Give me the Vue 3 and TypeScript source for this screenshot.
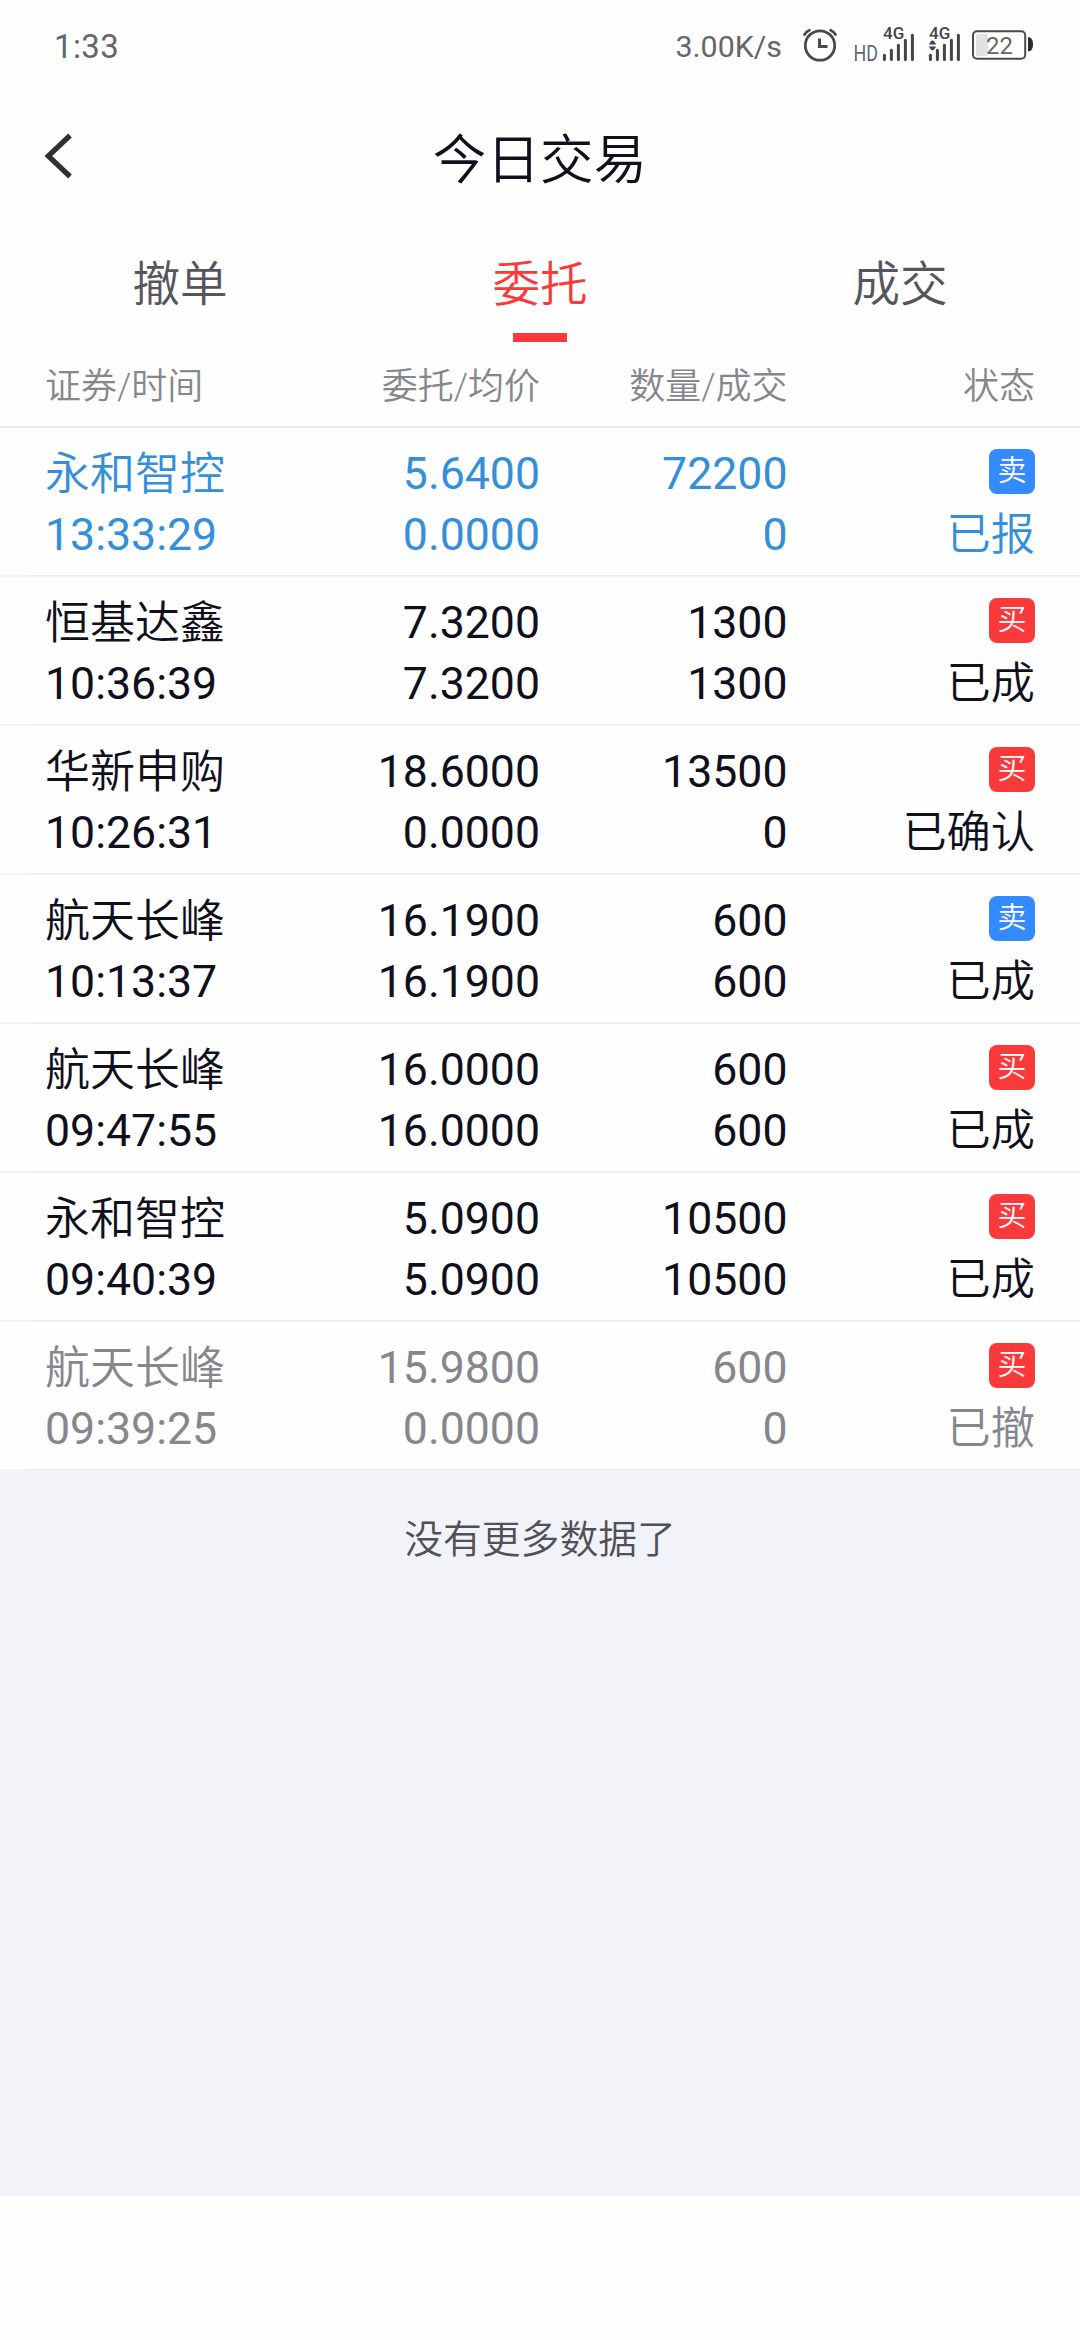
<script setup lang="ts">
type Side = 'buy' | 'sell'
type Tone = 'pending' | 'done' | 'cancelled'

interface Order {
  name: string
  time: string
  price: string
  average: string
  amount: string
  filled: string
  side: Side
  status: string
  tone: Tone
}

const tabs = ['撤单', '委托', '成交']
const activeTab = '委托'
const columns = ['证券/时间', '委托/均价', '数量/成交', '状态']
const sideLabel: Record<Side, string> = { buy: '买', sell: '卖' }

const orders: Order[] = [
  { name: '永和智控', time: '13:33:29', price: '5.6400', average: '0.0000', amount: '72200', filled: '0', side: 'sell', status: '已报', tone: 'pending' },
  { name: '恒基达鑫', time: '10:36:39', price: '7.3200', average: '7.3200', amount: '1300', filled: '1300', side: 'buy', status: '已成', tone: 'done' },
  { name: '华新申购', time: '10:26:31', price: '18.6000', average: '0.0000', amount: '13500', filled: '0', side: 'buy', status: '已确认', tone: 'done' },
  { name: '航天长峰', time: '10:13:37', price: '16.1900', average: '16.1900', amount: '600', filled: '600', side: 'sell', status: '已成', tone: 'done' },
  { name: '航天长峰', time: '09:47:55', price: '16.0000', average: '16.0000', amount: '600', filled: '600', side: 'buy', status: '已成', tone: 'done' },
  { name: '永和智控', time: '09:40:39', price: '5.0900', average: '5.0900', amount: '10500', filled: '10500', side: 'buy', status: '已成', tone: 'done' },
  { name: '航天长峰', time: '09:39:25', price: '15.9800', average: '0.0000', amount: '600', filled: '0', side: 'buy', status: '已撤', tone: 'cancelled' },
]

const bars = [0, 1, 2, 3, 4]
</script>

<template>
  <div class="screen">
    <div class="statusbar">
      <span class="clock">1:33</span>
      <div class="indicators">
        <span class="speed">3.00K/s</span>
        <svg class="status-icons" width="240" height="50" viewBox="800 20 240 50">
          <g fill="none" stroke="#4a4a4a" stroke-width="2.8" stroke-linecap="round">
            <circle cx="819" cy="45.5" r="14.7" />
            <path d="M818.5 38.5V46.5H826.5" stroke-width="3" stroke-linecap="butt" />
            <path d="M803.5 34.6Q805.2 31.6 808.4 30.3M834.5 34.6Q832.8 31.6 829.6 30.3" />
          </g>
          <text x="852.5" y="61" font-size="21.5" fill="#666" textLength="24.5" lengthAdjust="spacingAndGlyphs">HD</text>
          <g v-for="x in [883.4, 929.4]" :key="x" stroke="#444" stroke-width="3" stroke-linecap="round">
            <path v-for="i in bars" :key="i" :d="`M${x + i * 7} ${55.3 - i * 5}V59.5`" />
          </g>
          <g font-size="17" font-weight="500" fill="#444">
            <text x="882" y="39">4G</text>
            <text x="928" y="39">4G</text>
          </g>
          <path d="M928 44.5Q928 43.5 930.5 40.8Q931.5 40 932.5 40.8Q935 43.5 935 44.5ZM928 46.5H935Q935 47.5 932.5 50Q931.5 50.8 930.5 50Q928 47.5 928 46.5Z" fill="#444" />
          <rect x="975" y="34" width="12" height="22" rx="2" fill="#e2e2e2" />
          <rect x="972" y="31.2" width="52.2" height="27.6" rx="4" fill="none" stroke="#4a4a4a" stroke-width="2" />
          <text x="985" y="54" font-size="24" fill="#666">22</text>
          <path d="M1027 37C1030.5 37.3 1032 40 1032 44.3S1030.5 51.3 1027 51.6Z" fill="#2c2c2c" />
        </svg>
      </div>
    </div>

    <header class="titlebar">
      <svg class="back" width="36" height="54" viewBox="40 129 36 54">
        <path d="M70 135.5L48.3 156L70 176.5" fill="none" stroke="#303030" stroke-width="5.2" />
      </svg>
      <h1>今日交易</h1>
    </header>

    <nav class="tabs">
      <div v-for="tab in tabs" :key="tab" class="tab" :class="{ active: tab === activeTab }">{{ tab }}</div>
    </nav>

    <div class="grid head">
      <span v-for="column in columns" :key="column">{{ column }}</span>
    </div>

    <main class="content">
      <div v-for="order in orders" :key="order.time" class="row" :class="order.tone">
        <div class="grid cells">
          <div class="cell">
            <span class="cjk">{{ order.name }}</span>
            <span>{{ order.time }}</span>
          </div>
          <div class="cell">
            <span>{{ order.price }}</span>
            <span>{{ order.average }}</span>
          </div>
          <div class="cell">
            <span>{{ order.amount }}</span>
            <span>{{ order.filled }}</span>
          </div>
          <div class="cell">
            <div class="badge-line">
              <i class="badge" :class="order.side">{{ sideLabel[order.side] }}</i>
            </div>
            <span class="cjk state">{{ order.status }}</span>
          </div>
        </div>
      </div>
      <p class="end">没有更多数据了</p>
    </main>
  </div>
</template>

<style>
body {
  margin: 0;
  background: #fff;
}
</style>

<style scoped>
.screen {
  display: flex;
  flex-direction: column;
  width: 1080px;
  height: 2340px;
  overflow: hidden;
  background: #fefefe;
  color: #10101c;
  font-family: Roboto, 'Noto Sans CJK SC', sans-serif;
}

.statusbar {
  display: flex;
  justify-content: space-between;
  height: 94px;
  padding: 0 39px 0 54px;
  box-sizing: border-box;
  color: #666;
}

.clock {
  font-size: 33px;
  line-height: 93px;
  letter-spacing: 0.4px;
}

.indicators {
  display: flex;
  gap: 19px;
}

.speed {
  font-size: 30.4px;
  line-height: 93px;
}

.status-icons {
  margin-top: 20px;
  font-family: Roboto, sans-serif;
}

.titlebar {
  display: grid;
  grid-template-columns: 36px 1fr 36px;
  align-items: center;
  height: 124px;
  padding: 0 40px;
}

h1 {
  margin: 9px 0 0;
  font-size: 53.6px;
  font-weight: 350;
  line-height: 70px;
  text-align: center;
}

.tabs {
  display: grid;
  grid-template-columns: repeat(3, 1fr);
  height: 124px;
}

.tab {
  display: flex;
  flex-direction: column;
  align-items: center;
  justify-content: space-between;
  padding-top: 37px;
  color: #55555d;
  font-size: 47.6px;
  font-weight: 350;
  line-height: 60px;
}

.tab.active {
  color: #fa3a3a;
}

.tab.active::after {
  content: '';
  width: 54px;
  height: 9px;
  background: #fa3a3a;
}

.grid {
  display: grid;
  grid-template-columns: repeat(4, 1fr);
  padding: 0 45px;
  text-align: right;
}

.grid > :first-child {
  text-align: left;
}

.head {
  height: 84px;
  border-bottom: 2px solid #ebebeb;
  color: #87868d;
  font-size: 36px;
  font-weight: 350;
  line-height: 90px;
}

.content {
  height: 1768px;
  background: #f2f3f8;
}

.row {
  height: 149px;
  font-size: 44.64px;
  line-height: 63px;
}

.cells {
  height: 147px;
  box-sizing: border-box;
  padding-top: 15px;
  background: #fefefe;
}

.row::after {
  content: '';
  display: block;
  height: 1px;
  margin-left: 30px;
  background: #ebebeb;
}

.cell {
  display: flex;
  flex-direction: column;
}

.cell span {
  height: 61px;
}

.cjk {
  font-size: 45px;
  font-weight: 350;
}

.cjk.state {
  font-size: 44.2px;
}

.badge-line {
  display: flex;
  justify-content: flex-end;
  height: 61px;
  padding-top: 6px;
  box-sizing: border-box;
}

.badge {
  width: 46px;
  height: 45px;
  border-radius: 8px;
  color: #fff;
  font-size: 29px;
  font-style: normal;
  font-weight: 350;
  line-height: 45px;
  text-align: center;
}

.badge.buy {
  background: #fa3a3a;
}

.badge.sell {
  background: #348aff;
}

.pending {
  color: #348fdb;
}

.cancelled {
  color: #87868d;
}

.end {
  margin: 0;
  padding-top: 41px;
  color: #505058;
  font-size: 38.8px;
  font-weight: 350;
  line-height: 56px;
  text-align: center;
}
</style>
